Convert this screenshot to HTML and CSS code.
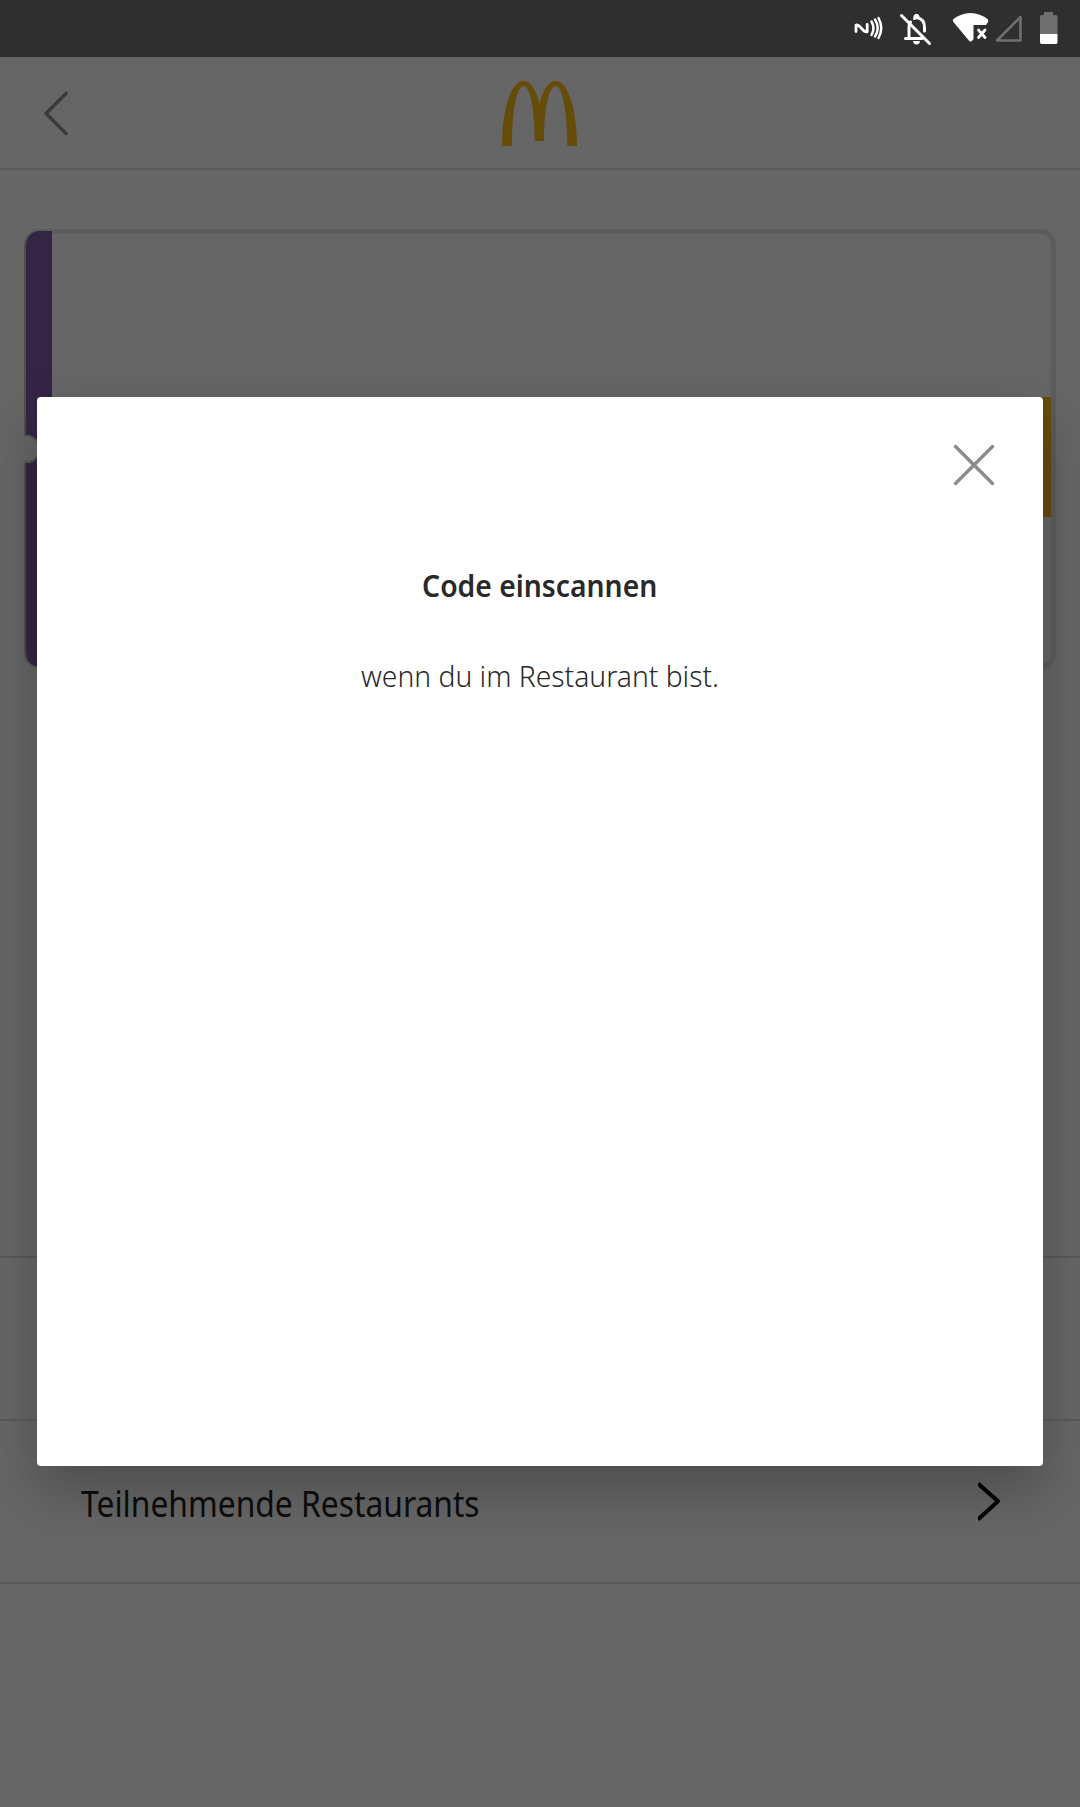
FILE: index.html
```html
<!DOCTYPE html>
<html lang="de">
<head>
<meta charset="utf-8">
<title>Code einscannen</title>
<link rel="stylesheet" href="styles.css">
</head>
<body>
<div class="status-bar">
  <svg class="status-icons" viewBox="830 0 250 57" width="250" height="57">
    <g fill="none" stroke="#fff" stroke-linecap="round" stroke-linejoin="round">
      <path stroke-width="2.8" d="M856 31.500V25C861 24 861.500 32.500 867.200 31.800V24.500"/>
      <path stroke-width="2.500" d="M871.500 21.500Q875.500 28 871.500 35M875 19.500Q880.500 28 875 36.500M878.500 18Q884 28 878.500 38"/>
      <path stroke-width="3" d="M909 38V27.500Q909 24 910.500 22M914.500 18.500L916.500 17.500Q925 19 924.500 28V31M905.500 38.500H922"/>
      <path stroke-width="3" d="M901.500 15.500L929.500 43.500"/>
      <path stroke-width="2.800" d="M978.500 30L985 37.500M985 30L978.500 37.500"/>
    </g>
    <path fill="#fff" d="M913.500 17V16Q916.500 11.500 919.500 16V19H913.500ZM913 41H920Q919.500 44.500 916.500 44.500T913 41Z"/>
    <path fill="#fff" d="M953 19.500Q961 13 970.500 13T988 19.500Q989 21 986 25H973.500V39Q970.500 44 968 39.500L953 21.500Z"/>
    <path fill="none" stroke="#707070" stroke-width="2.600" stroke-linejoin="round" d="M1020.500 17V40.500H997Z"/>
    <path fill="#707070" d="M1044 12H1053V15H1056Q1057.500 15 1057.500 17V34H1040V17Q1040 15 1041.500 15H1044Z"/>
    <path fill="#fff" d="M1040 34H1057.500V42Q1057.500 44 1056 44H1041.500Q1040 44 1040 42Z"/>
  </svg>
</div>
<div class="screen">
  <header class="header">
    <svg class="back" viewBox="0 0 24 46" width="24" height="46"><path d="M22 3.500L2 23.500L22 43.500"/></svg>
    <svg class="logo" viewBox="502 81 75 65" width="75" height="65"><path d="M502 146C502 109 511 81 523.500 81C531 81 536.500 91 539.500 103.500C542.500 91 548 81 555.800 81C568 81 577 109 577 146H567.300C567.300 110 562 86 555.800 86C549 86 544 108 544 141H534.700C534.700 108 530 86 523.500 86C517 86 512 110 512 146Z"/></svg>
  </header>
  <main class="content">
    <section class="coupon">
      <div class="stripe"><div class="stripe-part top"></div><div class="notch"></div><div class="stripe-part bottom"></div></div>
      <div class="tag"></div>
    </section>
    <nav class="rows">
      <div class="row"></div>
      <div class="row">
        <span class="row-label">Teilnehmende Restaurants</span>
        <svg viewBox="0 0 22 39" width="22" height="39"><path d="M0 1.500L20 19.200L0 37.500"/></svg>
      </div>
    </nav>
  </main>
  <div class="overlay">
    <div class="dialog">
      <svg class="close" viewBox="0 0 42 42" width="42" height="42"><path d="M2.500 2.500L39.500 39.500M39.500 2.500L2.500 39.500"/></svg>
      <h1 class="title">Code einscannen</h1>
      <p class="message">wenn du im Restaurant bist.</p>
    </div>
  </div>
</div>
</body>
</html>
```
FILE: styles.css
```css
* { box-sizing: border-box; }
body {
  margin: 0;
  width: 1080px;
  height: 1807px;
  overflow: hidden;
  display: flex;
  flex-direction: column;
  background: #fff;
  font-family: "Noto Sans", "Open Sans", sans-serif;
}
.status-bar {
  height: 57px;
  flex: none;
  display: flex;
  justify-content: flex-end;
  background: #2f2f2f;
}
.screen { position: relative; flex: 1; overflow: hidden; }
.header {
  height: 113px;
  display: grid;
  grid-template-columns: 501.5px 75px 1fr;
  border-bottom: 2px solid #e1e1e1;
}
.back { margin: 33px 0 0 44px; fill: none; stroke: #949494; stroke-width: 3.6; stroke-linecap: round; stroke-linejoin: round; }
.logo { margin-top: 24px; fill: #fcbd18; }
.content { display: flex; flex-direction: column; padding-top: 59px; }
.coupon {
  width: 1032px;
  height: 440px;
  margin-left: 24px;
  border: 5px solid #e6e6e6;
  border-left: 0;
  border-radius: 15px;
  display: flex;
  justify-content: space-between;
}
.stripe { width: 28px; height: 436px; margin-top: -3px; display: flex; flex-direction: column; }
.stripe-part { background: #855eac; border-left: 2px solid #c4c4c4; }
.stripe-part.top { height: 204px; border-top-left-radius: 15px; }
.stripe-part.bottom { flex: 1; border-bottom-left-radius: 15px; }
.notch { height: 28px; background: radial-gradient(circle at 2px 14px, #fff 0 12px, #d8d8d8 12.500px 14px, #855eac 14.500px); }
.tag { width: 40px; height: 120px; margin-top: 163px; background: #fcbd18; }
.rows { margin-top: 587px; border-top: 2px solid #dedede; }
.row {
  height: 163px;
  padding: 0 80px 0 81px;
  border-bottom: 2px solid #dedede;
  display: flex;
  justify-content: space-between;
}
.row-label {
  margin-top: 55px;
  color: #222;
  font-size: 36px;
  line-height: 56px;
  white-space: nowrap;
  transform: scaleX(.883);
  transform-origin: left;
}
.row svg { margin-top: 61px; fill: none; stroke: #000; stroke-width: 4; }
.overlay {
  position: absolute;
  inset: 0;
  padding: 340px 37px 0;
  background: rgba(0, 0, 0, .6);
}
.dialog {
  height: 1069px;
  display: flex;
  flex-direction: column;
  align-items: center;
  background: #fff;
  border-radius: 4px;
  box-shadow: 0 24px 56px rgba(0, 0, 0, .25);
  color: #292929;
}
.close { align-self: flex-end; margin: 47px 48px 0 0; fill: none; stroke: #8b8b8b; stroke-width: 3.4; stroke-linecap: round; }
.title, .message { font-size: 30px; line-height: 44px; white-space: nowrap; }
.title { margin: 78px 0 0; font-weight: 600; transform: scaleX(.943); }
.message { margin: 46px 0 0; font-weight: 300; transform: scaleX(.942); }
```
